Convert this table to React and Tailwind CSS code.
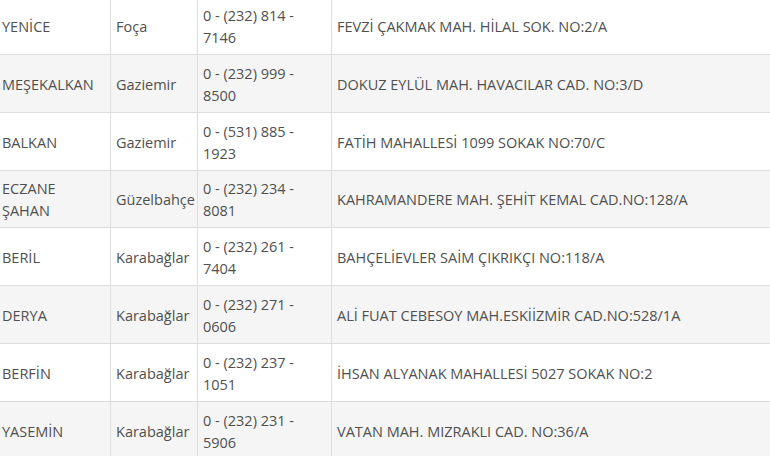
import React from "react";

const rows = [
  ["YENİCE", "Foça", "0 - (232) 814 - 7146", "FEVZİ ÇAKMAK MAH. HİLAL SOK. NO:2/A"],
  ["MEŞEKALKAN", "Gaziemir", "0 - (232) 999 - 8500", "DOKUZ EYLÜL MAH. HAVACILAR CAD. NO:3/D"],
  ["BALKAN", "Gaziemir", "0 - (531) 885 - 1923", "FATİH MAHALLESİ 1099 SOKAK NO:70/C"],
  ["ECZANE ŞAHAN", "Güzelbahçe", "0 - (232) 234 - 8081", "KAHRAMANDERE MAH. ŞEHİT KEMAL CAD.NO:128/A"],
  ["BERİL", "Karabağlar", "0 - (232) 261 - 7404", "BAHÇELİEVLER SAİM ÇIKRIKÇI NO:118/A"],
  ["DERYA", "Karabağlar", "0 - (232) 271 - 0606", "ALİ FUAT CEBESOY MAH.ESKİİZMİR CAD.NO:528/1A"],
  ["BERFİN", "Karabağlar", "0 - (232) 237 - 1051", "İHSAN ALYANAK MAHALLESİ 5027 SOKAK NO:2"],
  ["YASEMİN", "Karabağlar", "0 - (232) 231 - 5906", "VATAN MAH. MIZRAKLI CAD. NO:36/A"],
];

function App() {
  return (
    <div className="w-[770px] h-[456px] overflow-hidden bg-white">
      <table
        className="-mt-[4px] -ml-[4px] w-[800px] table-fixed border-collapse text-[14.5px] leading-[22px] text-[#505050]"
        style={{ fontFamily: '"Open Sans", "Noto Sans", sans-serif' }}
      >
        <colgroup>
          <col className="w-[114px]" />
          <col className="w-[87px]" />
          <col className="w-[134px]" />
          <col />
        </colgroup>
        <tbody>
          {rows.map((r, i) => (
            <tr key={i} className={i % 2 === 1 ? "bg-[#f5f5f5]" : "bg-white"}>
              {r.map((c, j) => (
                <td
                  key={j}
                  className="h-[57.85px] border border-[#dddddd] px-[5px] pt-[7.5px] pb-[4.5px] align-middle"
                >
                  {c}
                </td>
              ))}
            </tr>
          ))}
        </tbody>
      </table>
    </div>
  );
}

export default App;
